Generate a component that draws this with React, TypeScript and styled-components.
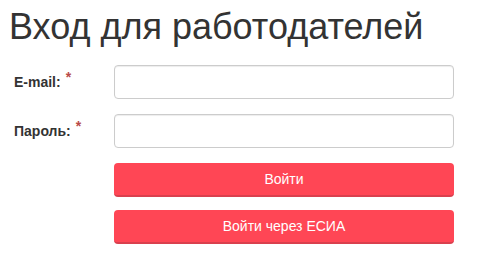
import styled, { createGlobalStyle } from "styled-components";

const GlobalStyle = createGlobalStyle`
  html, body {
    margin: 0;
    padding: 0;
    background: #ffffff;
    font-family: "Liberation Sans", Arial, sans-serif;
    color: #333333;
  }
  * {
    box-sizing: border-box;
  }
`;

const Page = styled.div`
  padding: 7px 10px 0 9px;
  width: 478px;
`;

const Title = styled.h1`
  margin: 0 0 18px 0;
  font-size: 36px;
  font-weight: 400;
  line-height: 40px;
  color: #333333;
`;

const Form = styled.form`
  display: flex;
  flex-direction: column;
  gap: 15px;
  width: 445px;
`;

const Row = styled.div<{ $gap?: number }>`
  display: grid;
  grid-template-columns: 105px 1fr;
  align-items: center;
  height: 34px;
  margin-top: ${({ $gap }) => $gap || 0}px;
`;

const Label = styled.label`
  padding-left: 5px;
  font-size: 14px;
  font-weight: 700;
  color: #333333;
  white-space: nowrap;
`;

const Star = styled.span`
  position: relative;
  top: -5px;
  margin-left: 5px;
  color: #b94a48;
  font-size: 14px;
`;

const Input = styled.input`
  width: 100%;
  height: 34px;
  border: 1px solid #cccccc;
  border-radius: 4px;
  background: #ffffff;
  padding: 6px 12px;
  font-size: 14px;
  font-family: inherit;
  box-shadow: inset 0 1px 1px rgba(0, 0, 0, 0.075);
  outline: none;
`;

const Button = styled.button`
  grid-column: 2;
  width: 100%;
  height: 34px;
  border: none;
  border-bottom: 2px solid #d9404e;
  border-radius: 4px;
  background: #ff4655;
  color: #ffffff;
  font-size: 14px;
  font-family: inherit;
  cursor: pointer;
  padding: 0;
`;

export default function App() {
  return (
    <>
      <GlobalStyle />
      <Page>
        <Title>Вход для работодателей</Title>
        <Form onSubmit={(e) => e.preventDefault()}>
          <Row>
            <Label>
              E-mail:<Star>*</Star>
            </Label>
            <Input type="email" />
          </Row>
          <Row>
            <Label>
              Пароль:<Star>*</Star>
            </Label>
            <Input type="password" />
          </Row>
          <Row>
            <Button type="submit">Войти</Button>
          </Row>
          <Row $gap={-2}>
            <Button type="button">Войти через ЕСИА</Button>
          </Row>
        </Form>
      </Page>
    </>
  );
}
